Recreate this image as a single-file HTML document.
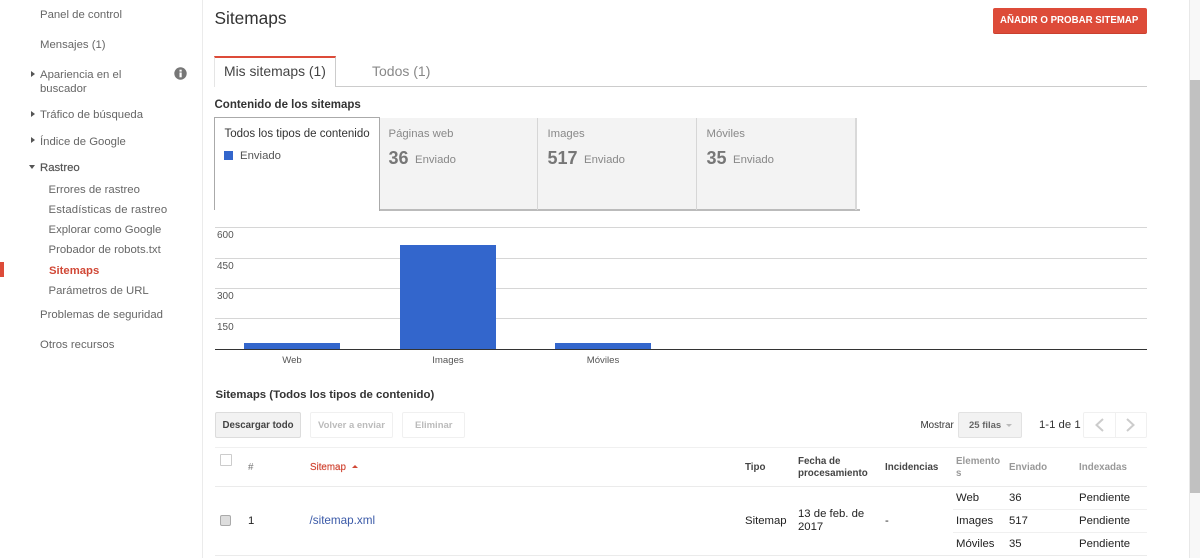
<!DOCTYPE html>
<html lang="es"><head><meta charset="utf-8"><title>Sitemaps</title>
<style>
html,body{margin:0;padding:0;background:#fff}
body{position:relative;width:1200px;height:558px;overflow:hidden;font-family:"Liberation Sans",Arial,sans-serif;font-size:11.35px;color:#222}
.a{position:absolute;white-space:nowrap;line-height:14px}
.r{position:absolute;box-sizing:border-box}
.n{color:#666;margin-top:1px}
.s{color:#666;margin-top:1px}
.tri{position:absolute;width:0;height:0;border-style:solid;border-color:transparent}
.h{font-size:9.8px;font-weight:bold;color:#444;margin-top:1px}
.g{color:#888}
.t{color:#222}
.grid{position:absolute;left:215px;width:932px;height:1px;background:#d6d6d6}
.ax{position:absolute;font-size:10px;color:#555;line-height:12px;white-space:nowrap}
.lab{position:absolute;font-size:9.6px;color:#555;line-height:12px;width:96px;text-align:center}
.bar{position:absolute;background:#3366cc;width:96px}
</style></head><body>

<div class="r" style="left:202px;top:0;width:1px;height:558px;background:#ebebeb"></div>

<div class="a n" style="left:40px;top:7px">Panel de control</div>
<div class="a n" style="left:40px;top:37px">Mensajes (1)</div>
<div class="tri" style="left:31px;top:71px;border-width:3px 0 3px 4px;border-left-color:#555"></div>
<div class="a n" style="left:40px;top:67px">Apariencia en el</div>
<div class="a n" style="left:40px;top:81px">buscador</div>
<svg style="position:absolute;left:174px;top:67px" width="13" height="13" viewBox="0 0 13 13"><circle cx="6.5" cy="6.5" r="6.2" fill="#777"/><rect x="5.5" y="5.5" width="2.2" height="4.8" fill="#fff"/><rect x="5.5" y="2.7" width="2.2" height="1.9" fill="#fff"/></svg>
<div class="tri" style="left:31px;top:111px;border-width:3px 0 3px 4px;border-left-color:#555"></div>
<div class="a n" style="left:40px;top:107px">Tráfico de búsqueda</div>
<div class="tri" style="left:31px;top:137px;border-width:3px 0 3px 4px;border-left-color:#555"></div>
<div class="a n" style="left:40px;top:134px">Índice de Google</div>
<div class="tri" style="left:29px;top:165px;border-width:4px 3.5px 0 3.5px;border-top-color:#555"></div>
<div class="a" style="left:40px;top:161px;color:#555;-webkit-text-stroke:.2px #555">Rastreo</div>
<div class="a s" style="left:48.5px;top:182px">Errores de rastreo</div>
<div class="a s" style="left:48.5px;top:202px;letter-spacing:.15px">Estadísticas de rastreo</div>
<div class="a s" style="left:48.5px;top:222px">Explorar como Google</div>
<div class="a s" style="left:48.5px;top:242px">Probador de robots.txt</div>
<div class="r" style="left:0;top:262px;width:4px;height:15px;background:#dd4b39"></div>
<div class="a" style="left:49px;top:264px;color:#d14836;font-weight:bold;font-size:11.3px">Sitemaps</div>
<div class="a s" style="left:48.5px;top:283px">Parámetros de URL</div>
<div class="a n" style="left:40px;top:307px">Problemas de seguridad</div>
<div class="a n" style="left:40px;top:337px">Otros recursos</div>

<div class="a" style="left:214.5px;top:8px;font-size:17.3px;line-height:20px;color:#333">Sitemaps</div>
<div class="r" style="left:993px;top:8px;width:154px;height:26px;background:#dd4b39;border-bottom:1px solid #c9402f;border-radius:2px"></div>
<div class="a" style="left:1000px;top:14px;font-size:9.7px;font-weight:bold;color:#fff">AÑADIR O PROBAR SITEMAP</div>

<div class="r" style="left:215px;top:86px;width:932px;height:1px;background:#ccc"></div>
<div class="r" style="left:214px;top:56px;width:122px;height:31px;background:#fff;border-top:2px solid #dd4b39;border-left:1px solid #e5e5e5;border-right:1px solid #ccc"></div>
<div class="a" style="left:224px;top:63px;font-size:13.9px;line-height:16px;color:#444">Mis sitemaps (1)</div>
<div class="a" style="left:372px;top:63px;font-size:14px;line-height:16px;color:#888">Todos (1)</div>

<div class="a" style="left:214.5px;top:98px;font-weight:bold;font-size:11.5px;color:#333">Contenido de los sitemaps</div>

<div class="r" style="left:380px;top:118px;width:475px;height:92px;background:#f3f3f3"></div>
<div class="r" style="left:379px;top:209px;width:481px;height:2px;background:#bbb"></div>
<div class="r" style="left:537px;top:118px;width:1px;height:92px;background:#d6d6d6"></div>
<div class="r" style="left:696px;top:118px;width:1px;height:92px;background:#d6d6d6"></div>
<div class="r" style="left:855px;top:118px;width:2px;height:92px;background:#d9d9d9"></div>
<div class="r" style="left:214px;top:117px;width:166px;height:93px;background:#fff;border:1px solid #aaa;border-width:1px 1px 0 1px"></div>
<div class="r" style="left:379px;top:117px;width:1px;height:94px;background:#aaa"></div>

<div class="a" style="left:224.5px;top:127px;color:#333;font-size:11.5px">Todos los tipos de contenido</div>
<div class="r" style="left:224px;top:151px;width:9px;height:9px;background:#3366cc"></div>
<div class="a" style="left:240px;top:149px;color:#555">Enviado</div>

<div class="a g" style="left:388.5px;top:127px">Páginas web</div>
<div class="a" style="left:388.5px;top:148px;font-size:18px;line-height:20px;font-weight:bold;color:#777">36</div>
<div class="a g" style="left:415px;top:153px">Enviado</div>
<div class="a g" style="left:547.5px;top:127px">Images</div>
<div class="a" style="left:547.5px;top:148px;font-size:18px;line-height:20px;font-weight:bold;color:#777">517</div>
<div class="a g" style="left:584px;top:153px">Enviado</div>
<div class="a g" style="left:706.5px;top:127px">Móviles</div>
<div class="a" style="left:706.5px;top:148px;font-size:18px;line-height:20px;font-weight:bold;color:#777">35</div>
<div class="a g" style="left:733px;top:153px">Enviado</div>

<div class="grid" style="top:227px"></div>
<div class="grid" style="top:258px"></div>
<div class="grid" style="top:288px"></div>
<div class="grid" style="top:318px"></div>
<div class="ax" style="left:217px;top:230px">600</div>
<div class="ax" style="left:217px;top:261px">450</div>
<div class="ax" style="left:217px;top:291px">300</div>
<div class="ax" style="left:217px;top:322px">150</div>
<div class="bar" style="left:244px;top:343px;height:6px"></div>
<div class="bar" style="left:400px;top:245px;height:104px"></div>
<div class="bar" style="left:555px;top:343px;height:6px"></div>
<div class="r" style="left:215px;top:349px;width:932px;height:1px;background:#333"></div>
<div class="lab" style="left:244px;top:355px">Web</div>
<div class="lab" style="left:400px;top:355px">Images</div>
<div class="lab" style="left:555px;top:355px">Móviles</div>

<div class="a" style="left:215.5px;top:388px;font-weight:bold;font-size:11.4px;color:#333">Sitemaps (Todos los tipos de contenido)</div>

<div class="r" style="left:215px;top:412px;width:86px;height:26px;background:#f2f2f2;border:1px solid #dcdcdc;border-radius:2px"></div>
<div class="a" style="left:222.5px;top:419px;font-size:9.7px;font-weight:bold;color:#444">Descargar todo</div>
<div class="r" style="left:310px;top:412px;width:83px;height:26px;border:1px solid #f0f0f0;border-radius:2px"></div>
<div class="a" style="left:318px;top:419px;font-size:9.5px;font-weight:bold;color:#bbb">Volver a enviar</div>
<div class="r" style="left:402px;top:412px;width:63px;height:26px;border:1px solid #f0f0f0;border-radius:2px"></div>
<div class="a" style="left:415px;top:419px;font-size:9.5px;font-weight:bold;color:#bbb">Eliminar</div>

<div class="a" style="left:920.5px;top:419px;font-size:9.8px;color:#333">Mostrar</div>
<div class="r" style="left:958px;top:412px;width:64px;height:26px;background:#f2f2f2;border:1px solid #e2e2e2;border-radius:2px"></div>
<div class="a" style="left:969px;top:419px;font-size:9.5px;font-weight:bold;color:#666">25 filas</div>
<div class="tri" style="left:1006px;top:424px;border-width:3px 3.5px 0 3.5px;border-top-color:#bbb"></div>
<div class="a" style="left:1039px;top:418px;color:#333">1-1 de 1</div>
<div class="r" style="left:1083px;top:412px;width:64px;height:26px;border:1px solid #f0f0f0;border-radius:2px"></div>
<div class="r" style="left:1115px;top:412px;width:1px;height:26px;background:#f0f0f0"></div>
<svg style="position:absolute;left:1095px;top:418px" width="42" height="14" viewBox="0 0 42 14" fill="none" stroke="#ccc" stroke-width="2"><path d="M8 1 L1.5 7 L8 13"/><path d="M32 1 L38.5 7 L32 13"/></svg>

<div class="r" style="left:215px;top:447px;width:932px;height:1px;background:#f0f0f0"></div>
<div class="r" style="left:220px;top:454px;width:12px;height:12px;border:1px solid #ccc;border-radius:1px;background:#fff"></div>
<div class="a h" style="left:248px;top:460px;font-weight:normal;color:#777">#</div>
<div class="a h" style="left:310px;top:460px;color:#d14836;font-weight:normal;-webkit-text-stroke:.2px #d14836">Sitemap</div>
<div class="tri" style="left:352px;top:465px;border-width:0 3.5px 3px 3.5px;border-bottom-color:#d14836"></div>
<div class="a h" style="left:745px;top:460px">Tipo</div>
<div class="a h" style="left:798px;top:455px;line-height:12px">Fecha de<br>procesamiento</div>
<div class="a h" style="left:885px;top:460px">Incidencias</div>
<div class="a h" style="left:956px;top:455px;line-height:12px;color:#999">Elemento<br>s</div>
<div class="a h" style="left:1009px;top:460px;color:#999">Enviado</div>
<div class="a h" style="left:1079px;top:460px;color:#999">Indexadas</div>
<div class="r" style="left:215px;top:486px;width:932px;height:1px;background:#ebebeb"></div>

<div class="r" style="left:220px;top:515px;width:11px;height:11px;background:#ddd;border:1px solid #aaa;border-radius:2px"></div>
<div class="a t" style="left:248px;top:514px">1</div>
<div class="a" style="left:309.5px;top:514px;color:#3b5aa8;font-size:11.7px">/sitemap.xml</div>
<div class="a t" style="left:745px;top:514px">Sitemap</div>
<div class="a t" style="left:798px;top:507px">13 de feb. de</div>
<div class="a t" style="left:798px;top:520px">2017</div>
<div class="a t" style="left:885px;top:514px">-</div>
<div class="a t" style="left:956px;top:491px">Web</div>
<div class="a t" style="left:1009px;top:491px">36</div>
<div class="a t" style="left:1079px;top:491px">Pendiente</div>
<div class="r" style="left:953px;top:509px;width:194px;height:1px;background:#f0f0f0"></div>
<div class="a t" style="left:956px;top:514px">Images</div>
<div class="a t" style="left:1009px;top:514px">517</div>
<div class="a t" style="left:1079px;top:514px">Pendiente</div>
<div class="r" style="left:953px;top:532px;width:194px;height:1px;background:#f0f0f0"></div>
<div class="a t" style="left:956px;top:537px">Móviles</div>
<div class="a t" style="left:1009px;top:537px">35</div>
<div class="a t" style="left:1079px;top:537px">Pendiente</div>
<div class="r" style="left:215px;top:555px;width:932px;height:1px;background:#ebebeb"></div>

<div class="r" style="left:1189px;top:0;width:11px;height:558px;background:#f8f8f8;border-left:1px solid #e8e8e8"></div>
<div class="r" style="left:1190px;top:80px;width:10px;height:413px;background:#c1c1c1"></div>
</body></html>
